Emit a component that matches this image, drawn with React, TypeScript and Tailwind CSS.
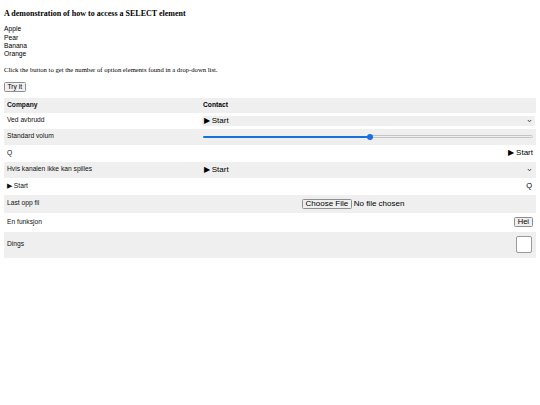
import React from "react";

const sans = "font-['Liberation_Sans',Arial,sans-serif]";
const serif = "font-['Liberation_Serif','Times_New_Roman',serif]";

function Chevron() {
  return (
    <svg width="5" height="4" viewBox="0 0 5 4" className="shrink-0">
      <path d="M0.8 1 L2.5 2.8 L4.2 1" fill="none" stroke="#333" strokeWidth="0.9" />
    </svg>
  );
}

function FakeSelect() {
  return (
    <div className="flex h-[10px] w-full items-center justify-between rounded-[1px] bg-[#efefef] pl-[1.5px] pr-[3px] text-[8px] leading-none text-black">
      <span>▶ Start</span>
      <Chevron />
    </div>
  );
}

function Slider() {
  return (
    <div className="relative flex h-[6px] w-full items-center">
      <div className="h-[2px] w-[50.5%] rounded-l-full bg-[#1a6fe0]" />
      <div className="h-[2.5px] flex-1 rounded-r-full border-[0.5px] border-[#c4c4c4] bg-[#efefef]" />
      <div className="absolute left-[50.5%] top-0 h-[6px] w-[6px] -translate-x-1/2 rounded-full bg-[#1a6fe0]" />
    </div>
  );
}

function Row({
  label,
  gray,
  h,
  children,
  bold,
}: {
  label: React.ReactNode;
  gray?: boolean;
  h: string;
  children?: React.ReactNode;
  bold?: boolean;
}) {
  return (
    <div className={`flex items-center ${h} ${gray ? "bg-[#efefef]" : "bg-white"}`}>
      <div className={`w-[196px] shrink-0 pl-[3px] text-[6.7px] leading-none text-[#111] ${bold ? "font-bold" : ""}`}>
        {label}
      </div>
      <div className="flex min-w-0 flex-1 items-center pl-[2px] pr-[1px]">{children}</div>
    </div>
  );
}

export default function App() {
  return (
    <main className={`min-h-screen bg-white p-[4px] text-black ${sans}`}>
      <h4 className={`mt-[5.5px] ${serif} text-[8px] font-bold leading-none`}>
        A demonstration of how to access a SELECT element
      </h4>

      <div className="mt-[7.5px] flex flex-col text-[6.7px]">
        {["Apple", "Pear", "Banana", "Orange"].map((f) => (
          <div key={f} className="flex h-[8.4px] items-center">
            {f}
          </div>
        ))}
      </div>

      <p className={`mt-[8.4px] ${serif} text-[6.67px] leading-none`}>
        Click the button to get the number of option elements found in a drop-down list.
      </p>

      <button className="mt-[8.4px] flex h-[10px] items-center rounded-[1.5px] border-[0.5px] border-[#8f8f8f] bg-[#efefef] px-[2.5px] text-[6.7px] leading-none">
        Try it
      </button>

      <div className="mt-[5.6px] flex flex-col">
        <Row label="Company" gray bold h="h-[15px]">
          <span className="pl-[1px] text-[6.7px] font-bold leading-none">Contact</span>
        </Row>
        <Row label="Ved avbrudd" h="h-[16px]">
          <FakeSelect />
        </Row>
        <Row label="Standard volum" gray h="h-[16px]">
          <div className="w-full pl-[1px] pr-[2px]">
            <Slider />
          </div>
        </Row>
        <Row label="Q" h="h-[17px]">
          <span className="ml-auto pr-[2px] text-[8px] leading-none">▶ Start</span>
        </Row>
        <Row label="Hvis kanalen ikke kan spilles" gray h="h-[16px]">
          <FakeSelect />
        </Row>
        <Row label="▶ Start" h="h-[17px]">
          <span className="ml-auto pr-[3px] text-[7.5px] leading-none">Q</span>
        </Row>
        <Row label="Last opp fil" gray h="h-[18px]">
          <div className="ml-[100px] flex items-center text-[8px] leading-none">
            <span className="flex h-[10px] items-center rounded-[1.5px] border-[0.5px] border-[#8f8f8f] bg-[#efefef] px-[2.5px]">
              Choose File
            </span>
            <span className="ml-[2px]">No file chosen</span>
          </div>
        </Row>
        <Row label="En funksjon" h="h-[19px]">
          <button className="ml-auto mr-[2px] flex h-[10px] items-center rounded-[1.5px] border-[0.5px] border-[#8f8f8f] bg-[#efefef] px-[3px] text-[7.5px] leading-none">
            Hei
          </button>
        </Row>
        <Row label="Dings" gray h="h-[26px]">
          <div className="ml-auto mr-[3px] h-[17px] w-[16px] rounded-[2px] border-[0.5px] border-[#9a9a9a] bg-white" />
        </Row>
      </div>
    </main>
  );
}
